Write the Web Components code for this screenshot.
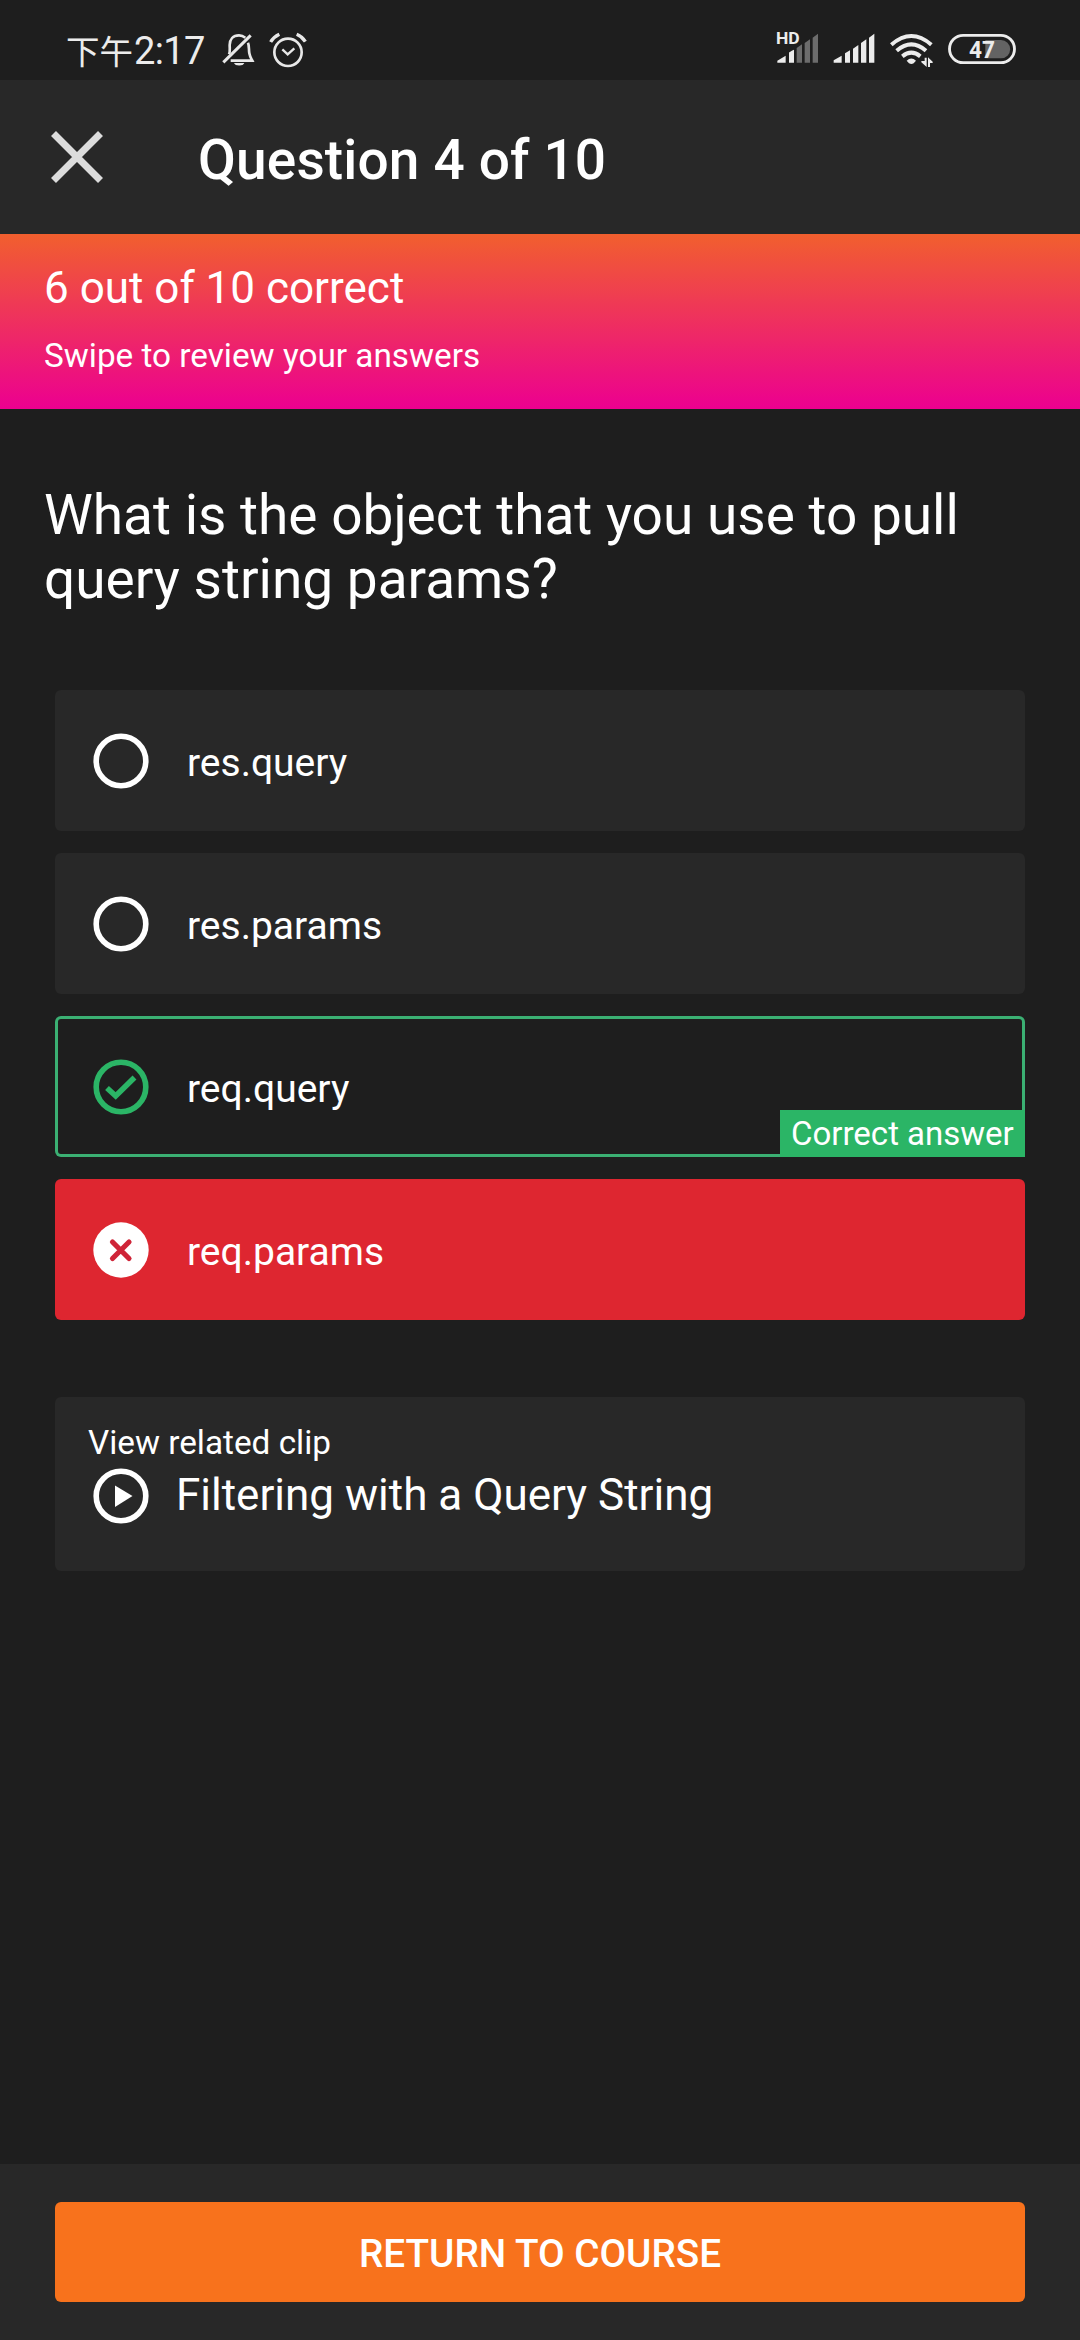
<!DOCTYPE html>
<html lang="en">
<head>
<meta charset="utf-8">
<title>Question 4 of 10</title>
<style>
  html, body { margin: 0; padding: 0; background: #1e1e1e; }
  body { width: 1080px; height: 2340px; overflow: hidden; font-family: Roboto, "Noto Sans CJK SC", sans-serif; color: #fff; }
</style>
</head>
<body>
<quiz-screen>
  <status-bar slot="status"></status-bar>
  <app-header slot="header">Question 4 of 10</app-header>
  <score-banner slot="banner">6 out of 10 correct<span slot="hint">Swipe to review your answers</span></score-banner>
  <quiz-question>What is the object that you use to pull query string params?</quiz-question>
  <answer-list>
    <answer-option>res.query</answer-option>
    <answer-option>res.params</answer-option>
    <answer-option state="correct">req.query<span slot="badge">Correct answer</span></answer-option>
    <answer-option state="wrong">req.params</answer-option>
  </answer-list>
  <related-clip>Filtering with a Query String<span slot="label">View related clip</span></related-clip>
  <action-footer slot="footer">RETURN TO COURSE</action-footer>
</quiz-screen>

<script>
const define = (name, html) => {
  const template = document.createElement('template');
  template.innerHTML = html;
  customElements.define(name, class extends HTMLElement {
    constructor() {
      super();
      this.attachShadow({ mode: 'open' }).append(template.content.cloneNode(true));
    }
  });
};

define('quiz-screen', `
<style>
  :host { display: flex; flex-direction: column; width: 1080px; height: 2340px; background: #1e1e1e; }
  main { flex: 1; display: flex; flex-direction: column; }
</style>
<slot name="status"></slot>
<slot name="header"></slot>
<slot name="banner"></slot>
<main><slot></slot></main>
<slot name="footer"></slot>`);

define('status-bar', `
<style>
  :host { display: flex; justify-content: space-between; height: 80px; background: #1e1e1e; color: #ececec; }
  .left { display: flex; padding-left: 66px; }
  .time { width: 154px; padding-top: 24px; font-size: 38px; line-height: 54px; letter-spacing: -0.6px; white-space: nowrap; }
  .cjk { font-family: "Noto Sans CJK SC", sans-serif; font-size: 33.5px; line-height: 1; letter-spacing: 0; margin-right: 1px; }
  svg { display: block; flex: none; overflow: visible; }
  .left svg, .right svg { margin-top: 10px; }
  .right { display: flex; padding-right: 40px; }
  text { font-family: Roboto, sans-serif; font-weight: 700; fill: #ececec; }
</style>
<div class="left">
  <div class="time"><span class="cjk">下午</span>2:17</div>
  <svg width="120" height="80" viewBox="540 0 360 240" fill="none" stroke="#e8e8e8" stroke-width="8">
    <path d="M550 157 L632 76" stroke-width="9"/>
    <path d="M567 133 C571 124 569 118 569 105 C569 88 579 76 597 76 C605 76 611 79 616 83"/>
    <path d="M624 98 C628 107 626 119 628 130 C630 141 634 146 637 152 L572 152"/>
    <path d="M582 159 H613 A16 10 0 0 1 582 159Z" fill="#e8e8e8" stroke="none"/>
    <circle cx="744" cy="127" r="41"/>
    <path d="M727 118 L743 133 L763 115" stroke-width="7"/>
    <path d="M692 96 Q701 81 718 73 M770 73 Q787 80 796 95" stroke-width="10"/>
  </svg>
</div>
<div class="right">
  <svg width="280" height="80" viewBox="0 0 840 240" fill="#ececec">
    <path d="M52 158 V152 L77 137 V158Z M87 158 V128 Q87 126 102 119 V158Z"/>
    <path d="M110 158 V114 L126 103 V158Z M134 158 V99 L150 88 V158Z M158 158 V83 L174 71 V158Z" fill="#6c6c6c"/>
    <text x="48" y="102" font-size="47" textLength="71" lengthAdjust="spacingAndGlyphs">HD</text>
    <path d="M221 158 V151 L245 137 V158Z M255 158 V130 L270 121 V158Z M279 158 V116 L295 105 V158Z M303 158 V99 L319 88 V158Z M327 158 V83 L343 71 V158Z"/>
    <g fill="none" stroke="#ececec" stroke-width="12">
      <path d="M394 104 Q454 52 514 104"/>
      <path d="M410 122 Q454 84 498 122"/>
      <path d="M427 139 Q454 117 481 139"/>
    </g>
    <path d="M440 152 Q454 139 468 152 L461 160 Q454 164 447 160Z"/>
    <path d="M494 143 H500 V171 L484 157 V153 H494Z M504 171 V142 L518 155 V159 H510 V171Z"/>
    <path d="M676 90 H723 A27.500 27.500 0 0 1 723 145 H676Z" fill="#636363"/>
    <rect x="568.500" y="76" width="195" height="82" rx="41" fill="none" stroke="#ececec" stroke-width="8.500"/>
    <text x="627" y="143" font-size="71" textLength="78" lengthAdjust="spacingAndGlyphs">47</text>
  </svg>
</div>`);

define('app-header', `
<style>
  :host { display: flex; align-items: center; gap: 95px; height: 154px; padding-left: 51px; box-sizing: border-box; background: #282828; }
  h1 { margin: 0; padding-top: 6px; font-size: 55px; line-height: 66px; font-weight: 500; letter-spacing: 0.15px; white-space: nowrap; }
  svg { display: block; }
</style>
<svg width="52" height="52" viewBox="0 0 52 52" stroke="#dcdcdc" stroke-width="7"><path d="M2.500 2.500 L49.500 49.500 M49.500 2.500 L2.500 49.500"/></svg>
<h1><slot></slot></h1>`);

define('score-banner', `
<style>
  :host { display: flex; flex-direction: column; gap: 22px; height: 175px; padding: 28px 44px 0; box-sizing: border-box; background: linear-gradient(#f15f2e, #ec0090); }
  .score { font-size: 44px; line-height: 52px; }
  .hint { font-size: 33.3px; line-height: 40px; }
</style>
<div class="score"><slot></slot></div>
<div class="hint"><slot name="hint"></slot></div>`);

define('quiz-question', `
<style>
  :host { display: block; height: 128px; padding: 74px 44px 79px; font-size: 55px; line-height: 64px; }
</style>
<slot></slot>`);

define('answer-list', `
<style>
  :host { display: flex; flex-direction: column; gap: 22px; padding: 0 55px; }
</style>
<slot></slot>`);

const ICONS = {
  open: '<circle cx="28" cy="28" r="24.800" fill="none" stroke="#fff" stroke-width="5.600"/>',
  correct: '<g fill="none" stroke="#2bb566" stroke-width="5.600"><circle cx="28" cy="28" r="24.800"/><path d="M14 29 L22.700 37 L41.500 18.500" stroke-linejoin="miter"/></g>',
  wrong: '<circle cx="28" cy="28" r="27.700" fill="#fff"/><path d="M19.500 20 L36 36.500 M36 20 L19.500 36.500" stroke="#cf2438" stroke-width="5.200" stroke-linecap="round"/>'
};

customElements.define('answer-option', class extends HTMLElement {
  constructor() {
    super();
    const state = this.getAttribute('state') || 'open';
    this.attachShadow({ mode: 'open' }).innerHTML = `
<style>
  :host { position: relative; display: flex; align-items: center; gap: 38px; height: 141px; padding-left: 38px; box-sizing: border-box; border-radius: 6px; background: #282828; font-size: 39px; line-height: 46px; }
  :host([state="correct"]) { background: #1e1e1e; box-shadow: inset 0 0 0 3px #3bb073; }
  :host([state="wrong"]) { background: #de2630; }
  svg { display: block; flex: none; }
  .text { padding-top: 4px; }
  .badge { position: absolute; right: 0; bottom: 0; width: 245px; height: 47px; padding-left: 11px; box-sizing: border-box; background: #2bb566; font-size: 33px; line-height: 47px; white-space: nowrap; }
</style>
<svg width="56" height="56" viewBox="0 0 56 56">${ICONS[state]}</svg>
<div class="text"><slot></slot></div>
${state === 'correct' ? '<div class="badge"><slot name="badge"></slot></div>' : ''}`;
  }
});

define('related-clip', `
<style>
  :host { display: flex; flex-direction: column; gap: 5px; margin: 77px 55px 0; height: 174px; padding: 26px 0 0 33px; box-sizing: border-box; border-radius: 6px; background: #282828; }
  .label { font-size: 33.3px; line-height: 40px; }
  .row { display: flex; align-items: center; gap: 27px; padding-left: 5px; font-size: 44px; line-height: 54px; }
  .title { padding-bottom: 2px; }
  svg { display: block; }
</style>
<div class="label"><slot name="label"></slot></div>
<div class="row">
  <svg width="56" height="56" viewBox="0 0 56 56"><circle cx="28" cy="28" r="24.800" fill="none" stroke="#fff" stroke-width="5.600"/><path d="M22 17.500 L39.500 28 L22 39Z" fill="#fff"/></svg>
  <div class="title"><slot></slot></div>
</div>`);

define('action-footer', `
<style>
  :host { display: block; height: 176px; padding: 38px 55px; box-sizing: border-box; background: #282828; }
  button { display: block; width: 100%; height: 100px; padding: 4px 0 0; border: 0; border-radius: 6px; background: #f8721c; color: #fff; font: 500 38.7px/46px Roboto, sans-serif; }
</style>
<button><slot></slot></button>`);
</script>
</body>
</html>
